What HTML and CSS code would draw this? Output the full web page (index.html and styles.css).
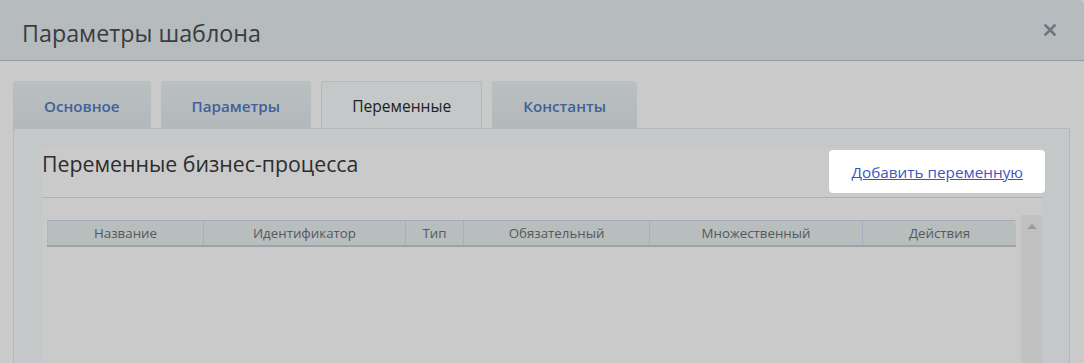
FILE: index.html
```html
<!DOCTYPE html>
<html>
<head>
    <title>Параметры шаблона</title>
    <link rel="stylesheet" href="styles.css">
</head>
<body>
    <div class="dialog">
        <div class="dialog-head">
            <h2>Параметры шаблона</h2>
            <span class="close">
                <svg width="12" height="12" viewBox="0 0 12 12"><path d="M1.5 1.5 L10.5 10.5 M10.5 1.5 L1.5 10.5" stroke="#6e7780" stroke-width="2.6" stroke-linecap="square"/></svg>
            </span>
        </div>
        <div class="dialog-body">
            <ul class="tabs">
                <li>Основное</li>
                <li>Параметры</li>
                <li class="active">Переменные</li>
                <li>Константы</li>
            </ul>
            <div class="tab-panel">
                <div class="section">
                    <div class="section-head">
                        <h3>Переменные бизнес-процесса</h3>
                        <div class="highlight"><a href="#">Добавить переменную</a></div>
                    </div>
                    <div class="grid-wrap">
                        <div class="grid">
                            <table>
                                <tr>
                                    <th class="c-name">Название</th>
                                    <th class="c-id">Идентификатор</th>
                                    <th class="c-type">Тип</th>
                                    <th class="c-req">Обязательный</th>
                                    <th class="c-mult">Множественный</th>
                                    <th class="c-act">Действия</th>
                                </tr>
                            </table>
                        </div>
                        <div class="scrollbar"><span class="arrow"></span></div>
                    </div>
                </div>
            </div>
        </div>
    </div>
</body>
</html>
```

FILE: styles.css
```css
html, body {
    margin: 0;
    padding: 0;
    height: 100%;
    overflow: hidden;
    background-color: #cacaca;
    font-family: "Open Sans", Arial, sans-serif;
}

.dialog {
    height: 100%;
    display: flex;
    flex-direction: column;
    border-top-right-radius: 5px;
    overflow: hidden;
}

.dialog-head {
    height: 60px;
    flex: none;
    background-color: #b6bbbd;
    border-bottom: 1px solid #999c9d;
    display: flex;
    align-items: center;
    justify-content: space-between;
    padding: 0 22px;
}

.dialog-head h2 {
    margin: 0;
    font-size: 23.3px;
    font-weight: 400;
    color: #3a3c3d;
    padding-top: 5px;
}

.close {
    display: flex;
    margin-right: 6px;
}

.dialog-body {
    flex: 1;
    display: flex;
    flex-direction: column;
    padding: 20px 14px 0 13px;
}

.tabs {
    list-style: none;
    margin: 0;
    padding: 0;
    display: flex;
    gap: 10px;
    height: 47px;
    position: relative;
    z-index: 1;
}

.tabs li {
    padding: 0 31px;
    height: 47px;
    line-height: 50px;
    font-size: 15.2px;
    font-weight: 600;
    color: #41619a;
    background: linear-gradient(#bac0c2, #b3b9bb);
    border-radius: 3px 3px 0 0;
}

.tabs li.active {
    color: #1f2021;
    background: #c4c8c9;
    border: 1px solid #b3b9bd;
    border-bottom: none;
    box-sizing: border-box;
    line-height: 48px;
    font-size: 15.6px;
    font-weight: 400;
    padding: 0 30px;
}

.tab-panel {
    flex: 1;
    background-color: #c4c8c9;
    border: 1px solid #b3b9bd;
    border-bottom: none;
    padding: 19px 27px 0 28px;
    display: flex;
    flex-direction: column;
}

.section {
    flex: 1;
    background-color: #cacaca;
    display: flex;
    flex-direction: column;
}

.section-head {
    height: 49px;
    border-bottom: 1px solid #afb0b1;
    display: flex;
    justify-content: space-between;
    align-items: flex-start;
}

.section-head h3 {
    margin: 0;
    font-size: 21.3px;
    font-weight: 400;
    color: #2c2d2e;
    line-height: 32px;
}

.highlight {
    background-color: #fff;
    border-radius: 4px;
    margin-top: 2px;
    margin-right: -3px;
    height: 43px;
    padding: 0 22px;
    display: flex;
    align-items: center;
}

.highlight a {
    color: #3d55c4;
    font-size: 15.3px;
    text-decoration: underline;
}

.grid-wrap {
    flex: 1;
    margin-top: 17px;
    display: flex;
}

.grid {
    flex: 1;
    padding: 5px;
}

table {
    width: 969px;
    border-collapse: collapse;
    table-layout: fixed;
}

th {
    height: 24px;
    padding: 0;
    background-color: #b8bdbe;
    border-top: 1px solid #a9acbf;
    border-bottom: 2px solid #9fa3a7;
    border-left: 1px solid #a9acbf;
    font-size: 13.3px;
    font-weight: 400;
    color: #565859;
}

th:first-child {
    border-left: 1px solid #b4b7bd;
}

th:last-child {
    border-top-right-radius: 4px;
}

.c-name { width: 155px; }
.c-id { width: 201px; }
.c-type { width: 57px; }
.c-req { width: 185px; }
.c-mult { width: 212px; }
.c-act { width: 153px; }

.scrollbar {
    width: 21px;
    background-color: #c1c1c1;
    display: flex;
    justify-content: center;
}

.arrow {
    margin-top: 9px;
    width: 0;
    height: 0;
    border-left: 5px solid transparent;
    border-right: 5px solid transparent;
    border-bottom: 5px solid #9b9b9b;
}
```
